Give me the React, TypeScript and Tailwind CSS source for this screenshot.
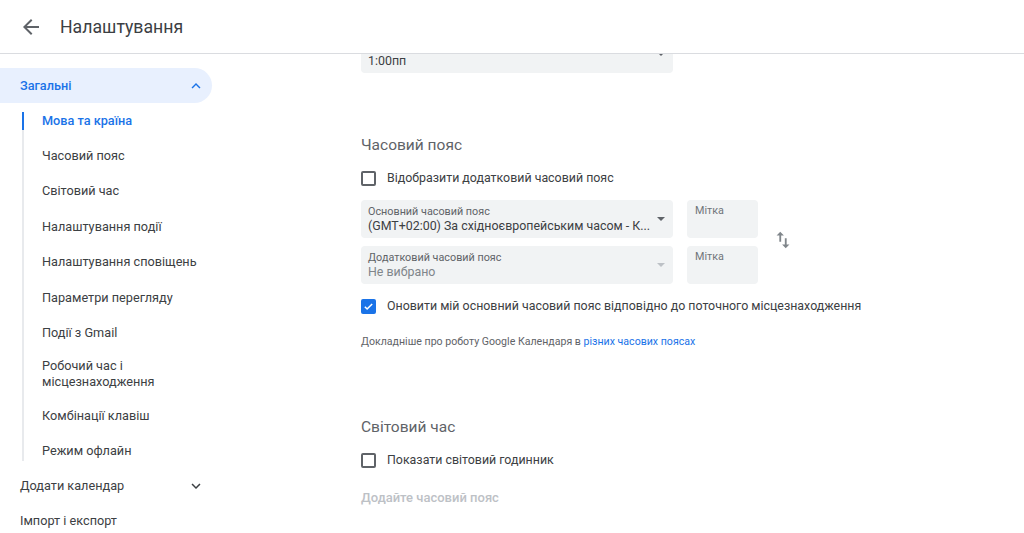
import React from "react";

const subItems: string[][] = [
  ["Мова та країна"],
  ["Часовий пояс"],
  ["Світовий час"],
  ["Налаштування події"],
  ["Налаштування сповіщень"],
  ["Параметри перегляду"],
  ["Події з Gmail"],
  ["Робочий час і", "місцезнаходження"],
  ["Комбінації клавіш"],
  ["Режим офлайн"],
];

function ArrowBack() {
  return (
    <svg width="24" height="24" viewBox="0 0 24 24" fill="#5f6368">
      <path d="M20 11H7.83l5.59-5.59L12 4l-8 8 8 8 1.41-1.41L7.83 13H20v-2z" />
    </svg>
  );
}

function ChevronUp({ color }: { color: string }) {
  return (
    <svg width="18" height="18" viewBox="0 0 24 24" fill={color}>
      <path d="M12 8l-6 6 1.41 1.41L12 10.83l4.59 4.58L18 14z" />
    </svg>
  );
}

function ChevronDown({ color }: { color: string }) {
  return (
    <svg width="18" height="18" viewBox="0 0 24 24" fill={color}>
      <path d="M16.59 8.59L12 13.17 7.41 8.59 6 10l6 6 6-6z" />
    </svg>
  );
}

function DropArrow({ color }: { color: string }) {
  return (
    <svg width="8" height="4" viewBox="0 0 8 4" fill={color}>
      <path d="M0 0h8L4 4z" />
    </svg>
  );
}

function SwapVert() {
  return (
    <svg width="22" height="22" viewBox="0 0 24 24" fill="#80868b">
      <path d="M16 17.01V10h-2v7.01h-3L15 21l4-3.99h-3zM9 3L5 6.99h3V14h2V6.99h3L9 3z" />
    </svg>
  );
}

function Checkbox({ checked }: { checked?: boolean }) {
  if (checked) {
    return (
      <span className="flex h-[15px] w-[15px] shrink-0 items-center justify-center rounded-[2px] bg-[#1a73e8]">
        <svg width="11" height="11" viewBox="0 0 24 24" fill="none" stroke="#fff" strokeWidth="3.4">
          <path d="M4 12.5l5 5L20 6.5" />
        </svg>
      </span>
    );
  }
  return <span className="block h-[15px] w-[15px] shrink-0 rounded-[2px] border-2 border-[#5f6368]" />;
}

function SelectBox({
  label,
  value,
  muted,
}: {
  label?: string;
  value: string;
  muted?: boolean;
}) {
  return (
    <div className="relative h-[38px] w-[312px] rounded-[4px] bg-[#f1f3f4] pl-[7px] pr-[22px] pt-[5px]">
      <div className="h-[14px] whitespace-nowrap text-[10.8px] leading-[14px] text-[#5f6368]">{label}</div>
      <div
        className={`whitespace-nowrap text-[12.4px] leading-[14px] ${muted ? "text-[#80868b]" : "text-[#3c4043]"}`}
      >
        {value}
      </div>
      <span className="absolute right-[8px] top-[17px] flex">
        <DropArrow color={muted ? "#bdc1c6" : "#5f6368"} />
      </span>
    </div>
  );
}

function LabelBox() {
  return (
    <div className="h-[38px] w-[71px] rounded-[4px] bg-[#f1f3f4] pl-[8px] pt-[4px] text-[10.8px] leading-[14px] text-[#70757a]">
      Мітка
    </div>
  );
}

function CheckRow({ checked, children }: { checked?: boolean; children: React.ReactNode }) {
  return (
    <label className="flex h-[20px] items-center gap-[11px] text-[12.4px] text-[#3c4043]">
      <Checkbox checked={checked} />
      <span>{children}</span>
    </label>
  );
}

export default function App() {
  return (
    <div className="h-[533px] w-[1024px] overflow-hidden bg-white font-['Roboto',sans-serif] text-[#3c4043]">
      <header className="relative z-10 flex h-[54px] items-center border-b border-[#dadce0] bg-white">
        <div className="ml-[19px] flex h-6 w-6 items-center justify-center">
          <ArrowBack />
        </div>
        <h1 className="ml-[17px] text-[17.7px] leading-[24px] text-[#3c4043]">Налаштування</h1>
      </header>

      <div className="flex h-[479px]">
        <nav className="w-[256px] shrink-0 pt-[14px] text-[12.7px]">
          <div className="flex h-[35px] w-[212px] items-center justify-between rounded-r-full bg-[#e8f0fe] pl-[20px] pr-[7px]">
            <span className="font-medium text-[#1a73e8]">Загальні</span>
            <ChevronUp color="#1a73e8" />
          </div>

          <ul className="relative">
            <span className="absolute bottom-[8px] left-[22px] top-[9px] w-[2px] bg-[#e8eaed]" />
            {subItems.map((lines, i) => (
              <li
                key={i}
                className={`relative py-[7.7px] pl-[42px] ${
                  lines.length > 1 ? "leading-[16px]" : "leading-[20px]"
                } ${i === 0 ? "font-medium text-[#1a73e8]" : "text-[#3c4043]"}`}
              >
                {i === 0 && (
                  <span className="absolute left-[22px] top-[9px] h-[18px] w-[2px] bg-[#1a73e8]" />
                )}
                {lines.map((l) => (
                  <div key={l}>{l}</div>
                ))}
              </li>
            ))}
          </ul>

          <div className="flex h-[34px] w-[212px] items-center justify-between pl-[20px] pr-[7px]">
            <span>Додати календар</span>
            <ChevronDown color="#3c4043" />
          </div>
          <div className="flex h-[35px] w-[212px] items-center pl-[20px]">
            <span>Імпорт і експорт</span>
          </div>
        </nav>

        <main className="min-w-0 flex-1 overflow-hidden pl-[105px]">
          <div className="-mt-[19px]">
            <SelectBox value="1:00пп" />
          </div>

          <h2 className="mt-[60px] text-[15.5px] leading-[24px] text-[#5f6368]">Часовий пояс</h2>

          <div className="mt-[11px]">
            <CheckRow>Відобразити додатковий часовий пояс</CheckRow>
          </div>

          <div className="mt-[12px] flex items-center gap-[14px]">
            <div className="flex flex-col gap-[8px]">
              <SelectBox
                label="Основний часовий пояс"
                value="(GMT+02:00) За східноєвропейським часом - К..."
              />
              <SelectBox label="Додатковий часовий пояс" value="Не вибрано" muted />
            </div>
            <div className="flex flex-col gap-[8px]">
              <LabelBox />
              <LabelBox />
            </div>
            <div className="mt-[-4px]">
              <SwapVert />
            </div>
          </div>

          <div className="mt-[12px]">
            <CheckRow checked>
              Оновити мій основний часовий пояс відповідно до поточного місцезнаходження
            </CheckRow>
          </div>

          <p className="mt-[18px] text-[10.6px] leading-[16px] text-[#5f6368]">
            Докладніше про роботу Google Календаря в{" "}
            <span className="text-[#1a73e8]">різних часових поясах</span>
          </p>

          <h2 className="mt-[65px] text-[15.5px] leading-[24px] text-[#5f6368]">Світовий час</h2>

          <div className="mt-[11px]">
            <CheckRow>Показати світовий годинник</CheckRow>
          </div>

          <div className="mt-[20px] text-[13px] font-medium leading-[16px] text-[#bdc1c6]">
            Додайте часовий пояс
          </div>
        </main>
      </div>
    </div>
  );
}
